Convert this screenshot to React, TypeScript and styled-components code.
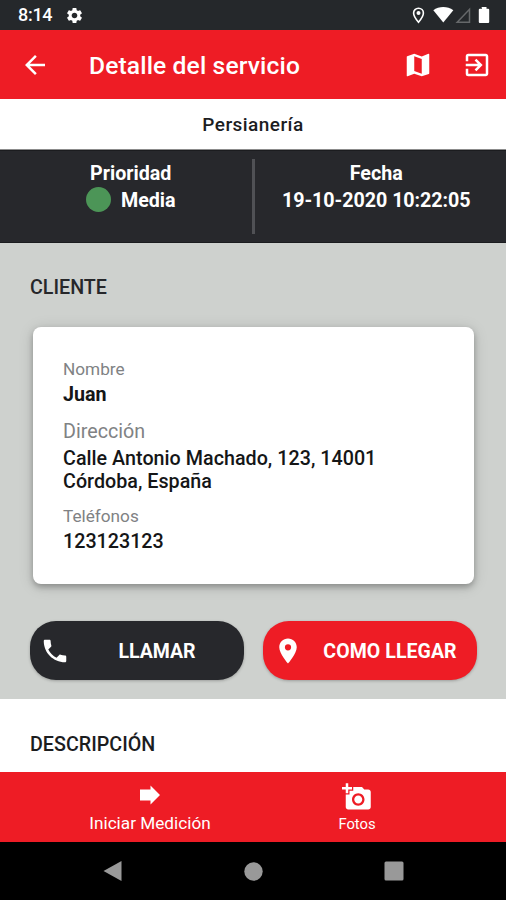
import React from "react";
import styled, { createGlobalStyle } from "styled-components";
import {
  MdAddAPhoto,
  MdArrowBack,
  MdExitToApp,
  MdLocationOn,
  MdMap,
  MdPhone,
  MdSettings,
} from "react-icons/md";

const red = "#ee1c25";
const dark = "#27282c";
const ink = "#1c1d1f";

const GlobalStyle = createGlobalStyle`
  * { box-sizing: border-box; }
  body { margin: 0; background: #000; font-family: Roboto, sans-serif; }
  svg { display: block; flex: none; }
`;

const Screen = styled.div`
  display: flex;
  flex-direction: column;
  width: 506px;
  height: 900px;
  overflow: hidden;
  background: #fff;
`;

const Label = styled.span<{ $size: number; $weight?: number; $track?: number; $line?: number }>`
  display: block;
  font-size: ${(p) => p.$size}px;
  font-weight: ${(p) => p.$weight ?? 500};
  letter-spacing: ${(p) => p.$track ?? 0}px;
  line-height: ${(p) => p.$line ?? 24}px;
  white-space: nowrap;
`;

const StatusBar = styled.header`
  display: flex;
  align-items: center;
  height: 30px;
  padding: 0 9px 0 18px;
  color: #fff;
  background: #25282b;
`;

const StatusIcons = styled.div`
  display: flex;
  align-items: center;
  margin-left: auto;
`;

const Gear = styled(MdSettings)`
  margin-left: 13px;
`;

const AppBar = styled.div`
  display: flex;
  align-items: center;
  height: 68.5px;
  padding: 1px 14px 0 20px;
  color: #fff;
  background: ${red};
`;

const Title = styled.h1`
  flex: 1;
  margin: 2px 0 0 39px;
  font-size: 24.6px;
  font-weight: 500;
  line-height: 30px;
  letter-spacing: 0.14px;
  white-space: nowrap;
`;

const Actions = styled.div`
  display: flex;
  gap: 29px;
`;

const Category = styled.div`
  display: flex;
  align-items: center;
  justify-content: center;
  height: 51.5px;
  padding-top: 2px;
  color: ${ink};
  background: #fff;
  border-bottom: 1px solid #8c8c8c;
`;

const Summary = styled.section`
  display: grid;
  grid-template-columns: 1fr 3px 1fr;
  height: 93px;
  color: #fff;
  background: ${dark};
  border-top: 1px solid #1b1c1f;
  border-bottom: 1px solid #1b1c1f;
`;

const SummaryCell = styled.div<{ $shift: number }>`
  display: flex;
  flex-direction: column;
  align-items: center;
  min-width: 0;
  padding: 9px ${(p) => Math.max(-p.$shift, 0)}px 0 ${(p) => Math.max(p.$shift, 0)}px;
`;

const Priority = styled.div`
  display: flex;
  align-items: center;
  gap: 10px;
`;

const Dot = styled.i`
  width: 25px;
  height: 25px;
  margin-top: -3px;
  border-radius: 50%;
  background: #4c9557;
`;

const Divider = styled.div`
  height: 75px;
  margin-top: 8px;
  background: #505155;
`;

const Client = styled.section`
  display: flex;
  flex-direction: column;
  height: 456px;
  padding: 33px 29px 0 30px;
  color: #26272a;
  background: #ced1ce;
`;

const Card = styled.div`
  height: 257px;
  margin: 27px 3px 0 3px;
  padding: 30px 30px 0;
  border-radius: 8px;
  color: #151617;
  background: #fff;
  box-shadow: 0 3px 6px rgba(0, 0, 0, 0.28), 0 2px 16px rgba(0, 0, 0, 0.12);
`;

const Field = styled.div<{ $gap: number }>`
  margin-bottom: ${(p) => p.$gap}px;
`;

const FieldName = styled(Label)`
  color: #808284;
`;

const Buttons = styled.div`
  display: grid;
  grid-template-columns: 1fr 1fr;
  gap: 19px;
  margin-top: 37px;
`;

const Pill = styled.button<{ $color: string }>`
  display: flex;
  align-items: center;
  height: 59px;
  padding: 0 0 0 10px;
  border: 0;
  border-radius: 26px;
  color: #fff;
  background: ${(p) => p.$color};
  box-shadow: 0 1px 3px rgba(0, 0, 0, 0.25);
  font-family: inherit;
`;

const PillText = styled(Label)`
  flex: 1;
  padding-top: 2px;
  text-align: center;
`;

const Description = styled.section`
  height: 73px;
  padding: 34px 30px 0;
  color: ${ink};
`;

const BottomTabs = styled.nav`
  display: flex;
  height: 70px;
  color: #fff;
  background: ${red};
`;

const Tab = styled.div<{ $left: number; $width: number; $top: number }>`
  display: flex;
  flex-direction: column;
  align-items: center;
  justify-content: space-between;
  width: ${(p) => p.$width}px;
  margin-left: ${(p) => p.$left}px;
  padding: ${(p) => p.$top}px 0 7px;
`;

const SystemNav = styled.nav`
  display: flex;
  align-items: center;
  justify-content: space-between;
  height: 58px;
  padding: 0 102px 0 103px;
  background: #000;
`;

export default function App() {
  return (
    <>
      <GlobalStyle />
      <Screen>
        <StatusBar>
          <Label $size={18} $line={32} $track={-0.3}>8:14</Label>
          <Gear size={19} />
          <StatusIcons>
            <svg width="13" height="17" viewBox="0 0 13 17">
              <path d="M6.5 1.2a4.9 4.9 0 0 0-4.9 4.9c0 3.5 4.9 9.2 4.9 9.2s4.9-5.7 4.9-9.2a4.9 4.9 0 0 0-4.9-4.9Z" fill="none" stroke="#fff" strokeWidth="1.6" />
              <circle cx="6.5" cy="6" r="2" fill="#fff" />
            </svg>
            <svg width="72" height="18" viewBox="425 6 72 18">
              <path d="M433.3 10.2C439 5.8 447.5 5.8 453.3 10.2L443.3 22.4Z" fill="#fff" />
              <path d="M469.5 9.3V22.2H457.2Z" fill="none" stroke="#66686a" strokeWidth="1.5" />
              <path d="M481.500 7h5v1.700h1.700q1 0 1 1V22q0 1-1 1h-8.400q-1 0-1-1V9.700q0-1 1-1h2.300Z" fill="#fff" />
            </svg>
          </StatusIcons>
        </StatusBar>
        <AppBar>
          <MdArrowBack size={30} />
          <Title>Detalle del servicio</Title>
          <Actions>
            <MdMap size={30} />
            <MdExitToApp size={30} />
          </Actions>
        </AppBar>
        <Category>
          <Label $size={19} $track={0.45}>Persianería</Label>
        </Category>
        <Summary>
          <SummaryCell $shift={10}>
            <Label $size={19.7} $weight={700} $line={27}>Prioridad</Label>
            <Priority>
              <Dot />
              <Label $size={19.7} $weight={700} $line={27}>Media</Label>
            </Priority>
          </SummaryCell>
          <Divider />
          <SummaryCell $shift={-8}>
            <Label $size={19.7} $weight={700} $line={27}>Fecha</Label>
            <Label $size={19.7} $weight={700} $line={27} $track={-0.05}>19-10-2020 10:22:05</Label>
          </SummaryCell>
        </Summary>
        <Client>
          <Label $size={19.7}>CLIENTE</Label>
          <Card>
            <Field $gap={11}>
              <FieldName $size={17.2} $weight={400}>Nombre</FieldName>
              <Label $size={19.7} $weight={700} $line={28}>Juan</Label>
            </Field>
            <Field $gap={11}>
              <FieldName $size={19.7} $weight={400} $line={24}>Dirección</FieldName>
              <Label $size={19.7} $line={23} $track={0.03}>
                <Spacer />
                Calle Antonio Machado, 123, 14001
                <br />
                Córdoba, España
              </Label>
            </Field>
            <Field $gap={0}>
              <FieldName $size={17.2} $weight={400}>Teléfonos</FieldName>
              <Label $size={19.7} $line={28}>123123123</Label>
            </Field>
          </Card>
          <Buttons>
            <Pill $color={dark}>
              <MdPhone size={30} />
              <PillText $size={19.5} $weight={700}>LLAMAR</PillText>
            </Pill>
            <Pill $color={red}>
              <MdLocationOn size={30} />
              <PillText $size={19.5} $weight={700} $track={0.08}>COMO LLEGAR</PillText>
            </Pill>
          </Buttons>
        </Client>
        <Description>
          <Label $size={19.7}>DESCRIPCIÓN</Label>
        </Description>
        <BottomTabs>
          <Tab $left={80} $width={140} $top={13}>
            <svg width="22" height="20" viewBox="0 0 22 20">
              <path d="M1 4.500h10.500V0.500L21 10l-9.500 9.500V15.500H1Z" fill="#fff" />
            </svg>
            <Label $size={17.2} $weight={400}>Iniciar Medición</Label>
          </Tab>
          <Tab $left={87} $width={100} $top={10}>
            <MdAddAPhoto size={30} />
            <Label $size={14.8} $weight={400} $line={22}>Fotos</Label>
          </Tab>
        </BottomTabs>
        <SystemNav>
          <svg width="19" height="22" viewBox="0 0 19 22"><path d="M0.500 11L18.500 1V21Z" fill="#999" /></svg>
          <svg width="19" height="19" viewBox="0 0 19 19"><circle cx="9.500" cy="9.500" r="9.200" fill="#999" /></svg>
          <svg width="20" height="20" viewBox="0 0 20 20"><rect x="0.500" y="0.500" width="19" height="19" rx="1.500" fill="#999" /></svg>
        </SystemNav>
      </Screen>
    </>
  );
}

const Spacer = styled.i`
  display: block;
  height: 3px;
`;
